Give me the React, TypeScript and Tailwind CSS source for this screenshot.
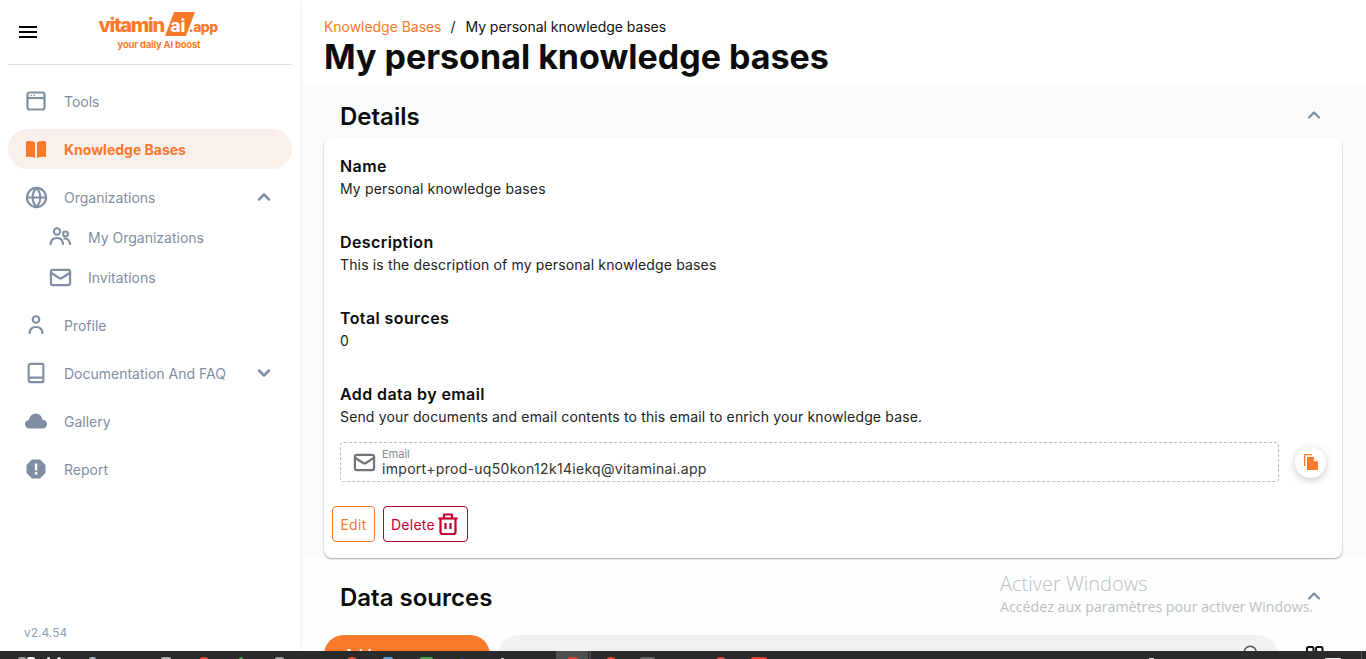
import React from "react";
import { Globe, Mail, Book, ChevronUp, ChevronDown, Search } from "lucide-react";

const muted = "text-[#7f8ea3]";

function Tools() {
  return (
    <svg width="24" height="24" viewBox="0 0 24 24" fill="none" stroke="#7f8ea3" strokeWidth="2.200">
      <rect x="3.500" y="3.500" width="17" height="17" rx="2" />
      <path d="M3.500 9h17" />
      <path d="M6.500 6.300h1.500M9.500 6.300h1.500" strokeWidth="1.300" />
    </svg>
  );
}
function OpenBook() {
  return (
    <svg width="24" height="24" viewBox="0 0 24 24" fill="#f97a2a">
      <path d="M2 4.500c3-.8 6-.6 9 .8V21c-3-1.400-6-1.600-9-.8zM22 4.500c-3-.8-6-.6-9 .8V21c3-1.400 6-1.600 9-.8z" />
    </svg>
  );
}
function CloudFill() {
  return (
    <svg width="26" height="24" viewBox="0 0 26 24" fill="#7f8ea3">
      <path d="M6 20c-3 0-5-2-5-4.600 0-2.500 1.800-4.400 4.300-4.600C6.200 7 9 4 12.700 4c3.800 0 6.700 2.800 7.400 6.700 2.900.1 4.900 2.100 4.900 4.700 0 2.600-2 4.600-4.800 4.600z" />
    </svg>
  );
}
function Report() {
  return (
    <svg width="24" height="24" viewBox="0 0 24 24">
      <path fill="#7f8ea3" d="M8 2.500h8L21.500 8v8L16 21.500H8L2.500 16V8z" />
      <rect x="10.900" y="6.500" width="2.400" height="7" fill="#fff" />
      <rect x="10.900" y="15.200" width="2.400" height="2.400" fill="#fff" />
    </svg>
  );
}
function People() {
  return (
    <svg width="24" height="24" viewBox="0 0 24 24" fill="none" stroke="#7f8ea3" strokeWidth="2">
      <circle cx="9" cy="6.500" r="3.200" />
      <circle cx="17.500" cy="9" r="2.400" />
      <path d="M2.500 20c0-4.500 2.500-7 6.500-7s6 2.500 6 7" />
      <path d="M15.500 13.600c3.700-.6 6.500 1.600 6.500 6.400" />
    </svg>
  );
}
function Person() {
  return (
    <svg width="24" height="24" viewBox="0 0 24 24" fill="none" stroke="#7f8ea3" strokeWidth="2.100">
      <circle cx="12" cy="6.500" r="3.300" />
      <path d="M5.500 21c0-4.500 2.500-7 6.500-7s6.500 2.500 6.500 7" />
    </svg>
  );
}
function NavRow({ icon, label, chevron, active, sub }: { icon: React.ReactNode; label: string; chevron?: "up" | "down"; active?: boolean; sub?: boolean }) {
  return (
    <div
      className={`flex items-center h-10 rounded-[20px] ${sub ? "pl-10" : "pl-4"} pr-4 ${active ? "bg-[#f9f0ec]" : ""}`}
    >
      <div className="w-6 flex justify-center shrink-0">{icon}</div>
      <span className={`ml-4 pt-[2px] text-sm ${active ? "font-bold text-[#f97a2a]" : muted}`}>{label}</span>
      {chevron === "up" && <ChevronUp size={20} strokeWidth={3} className="ml-auto mr-[2px] text-[#7f8ea3]" />}
      {chevron === "down" && <ChevronDown size={20} strokeWidth={3} className="ml-auto mr-[2px] text-[#7f8ea3]" />}
    </div>
  );
}
function Logo() {
  return (
    <div className="flex flex-col items-center w-[140px] leading-none text-[#f97a2a] font-extrabold">
      <div className="flex items-end h-[24px]">
        <span className="text-[20px] tracking-[-1.300px] leading-[22px]">vitamin</span>
        <span className="relative w-[30px] h-[24px] ml-[1px] flex items-end justify-center">
          <svg width="30" height="24" viewBox="0 0 30 24" className="absolute inset-0">
            <path d="M9 0h21l-9 24H0z" fill="#f97a2a" />
          </svg>
          <span className="relative text-white text-[17px] leading-[20px] pr-[4px]">ai</span>
        </span>
        <span className="relative -ml-[6px] text-[14px] tracking-[-0.6px] leading-[19px]">.app</span>
      </div>
      <span className="text-[9.500px] mt-[4px] tracking-[-0.2px] font-bold pl-[2px]">your daily AI boost</span>
    </div>
  );
}
function Field({ title, value }: { title: string; value: string }) {
  return (
    <div className="h-[76px]">
      <div className="text-base font-semibold text-[#0c0c0c] leading-6 tracking-[0.4px]">{title}</div>
      <div className="text-sm text-[#222] leading-[22px] tracking-[0.15px]">{value}</div>
    </div>
  );
}
function SectionHead({ title }: { title: string }) {
  return (
    <div className="flex items-center justify-between pl-4 pr-[18px] h-[44px] shrink-0">
      <span className="text-2xl font-semibold text-[#0c0c0c] pt-[2px]">{title}</span>
      <ChevronUp size={20} strokeWidth={2.800} className="text-[#7f8ea3] -mt-[2px]" />
    </div>
  );
}
const dots: [number, string, number, number][] = [
  [18, "#999", 8, 2], [27, "#eee", 8, 2], [47, "#ddd", 3, 2], [57, "#ddd", 4, 2], [89, "#9aa8b8", 7, 2], [161, "#aaa", 10, 2],
  [200, "#d84436", 8, 2], [239, "#46a040", 4, 2], [275, "#999", 9, 2], [348, "#d84436", 8, 2], [383, "#5a9bd0", 10, 2],
  [420, "#48a048", 13, 2], [460, "#2a3a90", 4, 1], [501, "#eee", 3, 1], [568, "#d84436", 10, 2], [607, "#d84436", 8, 2],
  [640, "#666", 15, 2], [717, "#d84436", 8, 2], [751, "#d84436", 16, 2], [1149, "#eee", 5, 1], [1325, "#eee", 16, 1],
];
export default function App() {
  return (
    <div className="w-[1366px] h-[659px] overflow-hidden flex flex-col relative bg-white font-['Inter','Liberation_Sans',sans-serif]">
      <div className="flex flex-1 min-h-0">
        <aside className="w-[300px] shrink-0 bg-white flex flex-col shadow-[0_0_6px_rgba(0,0,0,0.08)] z-10">
          <div className="mx-2 h-[65px] border-b border-[#dedede] flex items-start shrink-0">
            <svg width="20" height="14" viewBox="0 0 20 14" className="mt-[25px] ml-[10px]">
              <path d="M1 2h18M1 7h18M1 12h18" stroke="#000" strokeWidth="2" />
            </svg>
            <div className="ml-[50px] mt-[12px]"><Logo /></div>
          </div>
          <nav className="mx-2 mt-4 flex flex-col gap-2">
            <NavRow icon={<Tools />} label="Tools" />
            <NavRow icon={<OpenBook />} label="Knowledge Bases" active />
            <NavRow icon={<Globe size={23} strokeWidth={2.200} className={muted} />} label="Organizations" chevron="up" />
            <div className="-mt-2 flex flex-col">
              <NavRow sub icon={<People />} label="My Organizations" />
              <NavRow sub icon={<Mail size={23} strokeWidth={2.300} className={muted} />} label="Invitations" />
            </div>
            <NavRow icon={<Person />} label="Profile" />
            <NavRow icon={<Book size={22} strokeWidth={2.300} className={muted} />} label="Documentation And FAQ" chevron="down" />
            <NavRow icon={<CloudFill />} label="Gallery" />
            <NavRow icon={<Report />} label="Report" />
          </nav>
          <div className="mt-auto pl-6 pb-[10px] text-xs text-[#8d9db5]">v2.4.54</div>
        </aside>
        <main className="flex-1 min-w-0 overflow-hidden flex flex-col">
          <div className="pl-6 pr-6 pt-[18px] h-[86px] shrink-0">
            <div className="text-sm leading-[18px] flex gap-2 tracking-[-0.04px]">
              <span className="text-[#f97a2a] pr-[1px]">Knowledge Bases</span>
              <span className="text-[#111]">/</span>
              <span className="text-[#111] ml-[2px]">My personal knowledge bases</span>
            </div>
            <h1 className="text-[34px] font-bold leading-[44px] text-[#0c0c0c] -mt-[1px]">My personal knowledge bases</h1>
          </div>
          <div className="bg-[#f9fbfd] pl-6 pr-6 pt-[8px] shrink-0">
            <SectionHead title="Details" />
            <section className="bg-white rounded-lg shadow-[0_1px_2px_rgba(0,0,0,0.35)] h-[420px] pt-[16px] pl-4 pr-4 relative">
              <Field title="Name" value="My personal knowledge bases" />
              <Field title="Description" value="This is the description of my personal knowledge bases" />
              <Field title="Total sources" value="0" />
              <div className="text-base font-semibold text-[#0c0c0c] leading-6 tracking-[0.4px]">Add data by email</div>
              <div className="text-sm text-[#222] leading-[22px] tracking-[0.15px]">Send your documents and email contents to this email to enrich your knowledge base.</div>
              <div className="flex items-center mt-[14px]">
                <div className="flex-1 h-10 rounded border border-dashed border-[#bdbdbd] flex items-center pl-[12px]">
                  <Mail size={23} strokeWidth={2.300} className="text-[#757575]" />
                  <div className="ml-[6px] flex flex-col">
                    <span className="text-[11px] leading-[12px] text-[#8a8a8a] mt-[2px]">Email</span>
                    <span className="text-sm leading-[18px] text-[#333] tracking-[0.3px]">import+prod-uq50kon12k14iekq@vitaminai.app</span>
                  </div>
                </div>
                <div className="w-[31px] h-[31px] ml-4 rounded-full bg-white shadow-[0_2px_8px_rgba(0,0,0,0.22)] flex items-center justify-center">
                  <svg width="16" height="18" viewBox="0 0 16 18" fill="#f97a2a">
                    <path d="M1 2.200C1 1.500 1.500 1 2.200 1H9v1.300H2.300V13H1z" />
                    <path d="M4 4h6.500L15 8.500V17H4zM10.800 4.800v3.400h3.400z" fillRule="evenodd" />
                  </svg>
                </div>
              </div>
              <div className="flex gap-2 mt-6 -ml-2">
                <button className="h-9 w-[43px] pt-[2px] rounded border border-[#f97a2a] text-sm text-[#f97a2a] tracking-[0.3px]">Edit</button>
                <button className="h-9 w-[85px] pl-[7px] rounded border border-[#b8002a] text-sm text-[#c4002f] flex items-center gap-[2px] tracking-[0.25px]">
                  <span className="pt-[2px]">Delete</span>
                  <svg width="22" height="24" viewBox="0 0 22 24" fill="none" stroke="#c4002f" strokeWidth="2.200">
                    <path d="M1.500 6.500h19" />
                    <path d="M7 6V2.500h8V6" />
                    <path d="M3.500 6.500V20a2 2 0 0 0 2 2h11a2 2 0 0 0 2-2V6.500" />
                    <path d="M8.500 11v6M13.500 11v6" />
                  </svg>
                </button>
              </div>
            </section>
          </div>
          <div className="flex-1 min-h-0 bg-[#fdfefe] pl-6 pr-6 pt-[17px]">
            <SectionHead title="Data sources" />
            <div className="flex items-start gap-2 mt-4">
              <button className="w-[166px] h-10 rounded-[20px] bg-[#f97a2a] text-white text-sm font-semibold flex items-center justify-between px-5 shrink-0">
                <span>Add source</span><span className="text-xl leading-none">+</span>
              </button>
              <div className="w-[780px] h-10 rounded-[20px] bg-[#f1f1f1] flex items-start justify-end pr-[18px] pt-[9px]">
                <Search size={18} className="text-[#555]" />
              </div>
              <svg width="20" height="20" viewBox="0 0 20 20" fill="none" stroke="#111" strokeWidth="2" className="ml-[19px] mt-[10px]">
                <rect x="2" y="2" width="6.500" height="7" rx="1.500" /><rect x="11" y="2" width="6.500" height="7" rx="1.500" />
              </svg>
            </div>
          </div>
        </main>
      </div>
      <footer className="h-2 bg-[#2b2b2b] shrink-0 relative z-20 overflow-hidden">
        <div className="absolute left-[556px] top-0 w-[32px] h-2 bg-[#4f4f4f]" />
        <div className="absolute left-[589px] top-0 w-[2px] h-2 bg-[#444]" />
        <div className="absolute left-[1361px] top-0 w-px h-2 bg-[#555]" />
        {dots.map(([x, c, w, h], i) => (
          <div key={i} className="absolute bottom-0 rounded-t-sm" style={{ left: x, width: w, height: h, background: c }} />
        ))}
      </footer>
      <div className="absolute left-[1000px] top-[571px] z-30 font-['Open_Sans',sans-serif] text-[#bcbfc2] pointer-events-none">
        <div className="text-[20px] leading-[26px] font-light">Activer Windows</div>
        <div className="text-[14.200px] leading-[18px] mt-[1px]">Accédez aux paramètres pour activer Windows.</div>
      </div>
    </div>
  );
}
